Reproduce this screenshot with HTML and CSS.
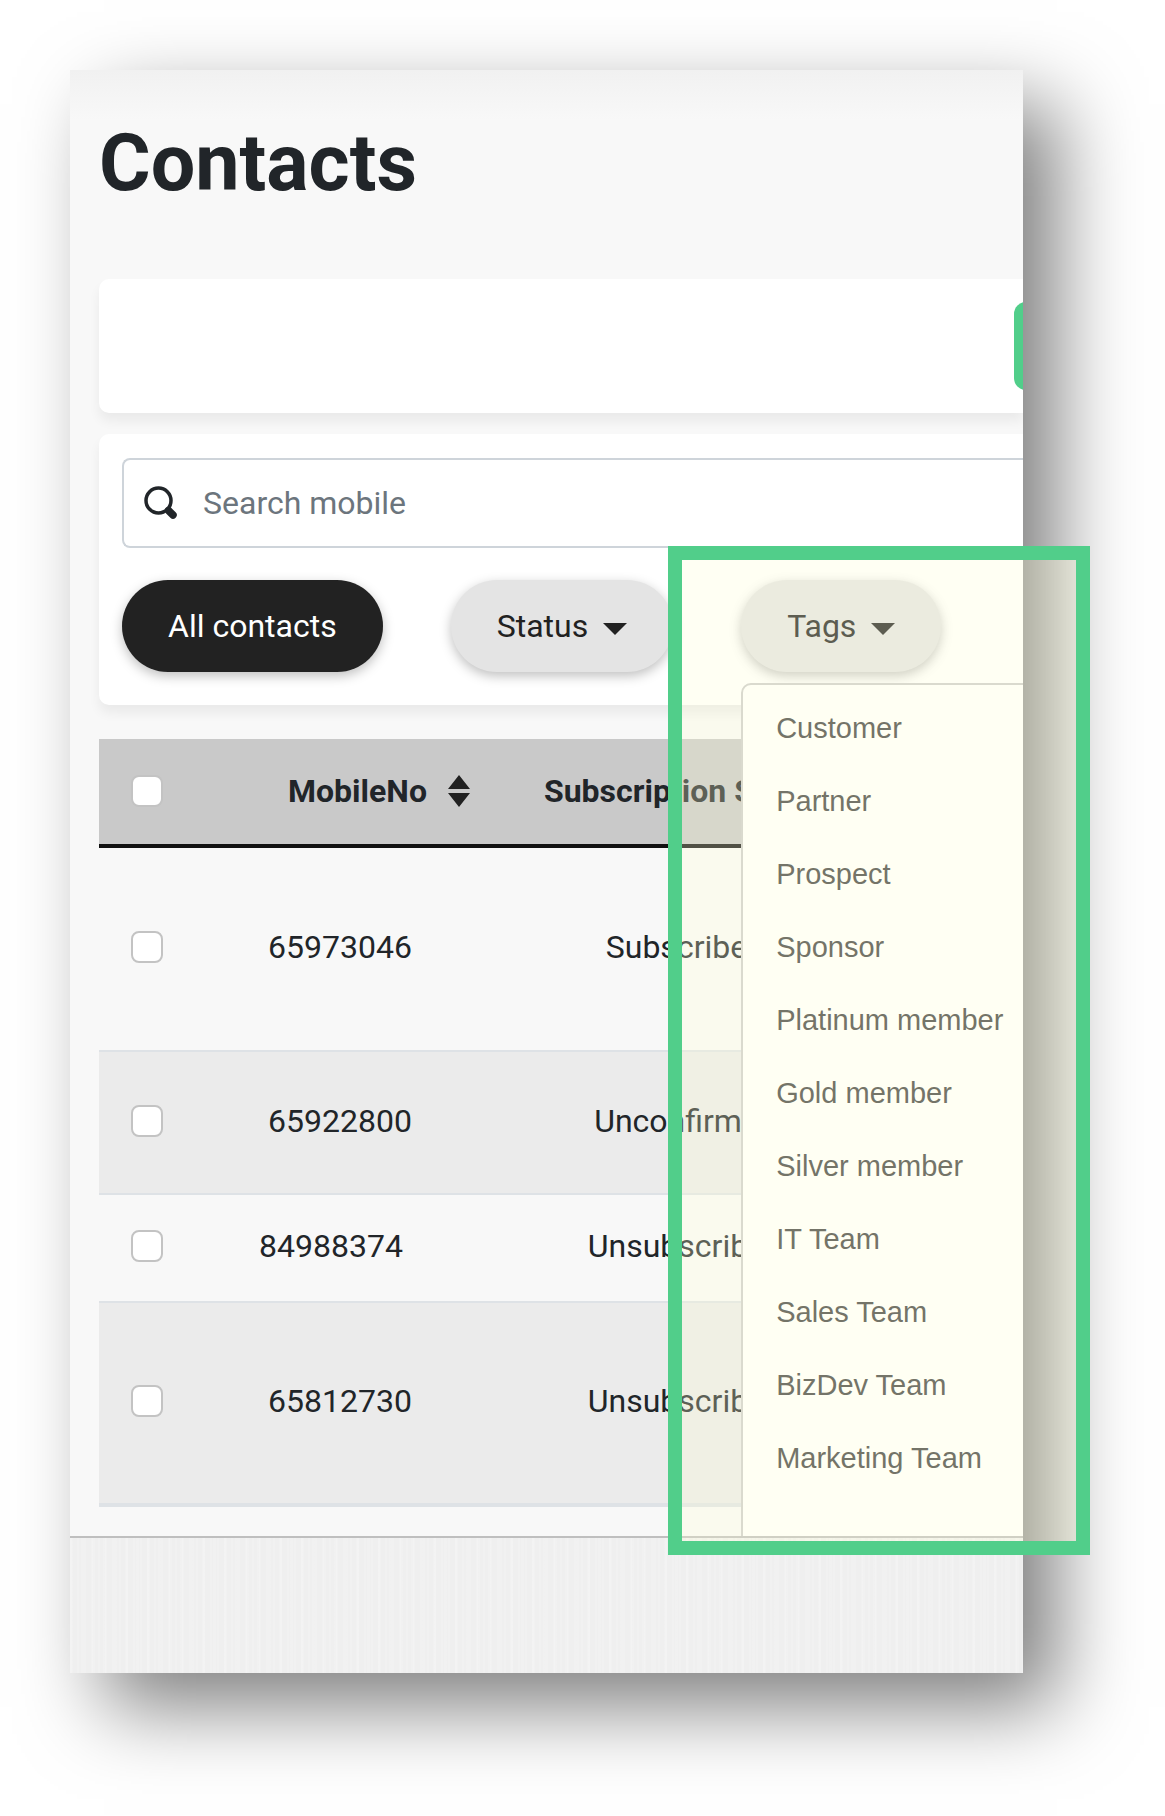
FILE: index.html
```html
<!DOCTYPE html>
<html lang="en">
<head>
    <meta charset="UTF-8">
    <meta name="viewport" content="width=device-width, initial-scale=1.0">
    <title>Contacts</title>
    <link rel="stylesheet" href="styles.css">
</head>
<body>
    <div class="stage">
        <main class="panel">
            <div class="content">
                <h1 class="title">Contacts</h1>

                <div class="card actions">
                    <button type="button" class="add-button" aria-label="Add contact"></button>
                </div>

                <div class="card filters">
                    <div class="search">
                        <svg class="search-icon" viewBox="0 0 34 34" aria-hidden="true">
                            <circle cx="14.5" cy="14.5" r="12.5" fill="none" stroke="#212529" stroke-width="3.5"/>
                            <path d="M24.5 24.5l4.500 4.500" stroke="#212529" stroke-width="7.5" stroke-linecap="round"/>
                        </svg>
                        <input type="text" id="search" placeholder="Search mobile" aria-label="Search mobile">
                    </div>
                    <div class="pills">
                        <button type="button" class="pill active">All contacts</button>
                        <button type="button" class="pill">Status <span class="caret"></span></button>
                        <div class="dropdown">
                            <button type="button" class="pill">Tags <span class="caret"></span></button>
                            <ul class="menu">
                                <li><a href="#">Customer</a></li>
                                <li><a href="#">Partner</a></li>
                                <li><a href="#">Prospect</a></li>
                                <li><a href="#">Sponsor</a></li>
                                <li><a href="#">Platinum member</a></li>
                                <li><a href="#">Gold member</a></li>
                                <li><a href="#">Silver member</a></li>
                                <li><a href="#">IT Team</a></li>
                                <li><a href="#">Sales Team</a></li>
                                <li><a href="#">BizDev Team</a></li>
                                <li><a href="#">Marketing Team</a></li>
                            </ul>
                        </div>
                    </div>
                </div>

                <table class="contacts">
                    <colgroup>
                        <col class="col-check">
                        <col class="col-mobile">
                        <col class="col-status">
                        <col>
                    </colgroup>
                    <thead>
                        <tr>
                            <th><input type="checkbox" aria-label="Select all"></th>
                            <th class="mobile">
                                <span class="sortable">
                                    MobileNo
                                    <svg class="sort" viewBox="0 0 22 34" aria-hidden="true">
                                        <path d="M11 1l11 14H0z M0 19h22L11 33z" fill="#212121"/>
                                    </svg>
                                </span>
                            </th>
                            <th>Subscription Status</th>
                            <th></th>
                        </tr>
                    </thead>
                    <tbody>
                        <tr class="tall">
                            <td><input type="checkbox" aria-label="Select 65973046"></td>
                            <td class="mobile">65973046</td>
                            <td>Subscribed</td>
                            <td></td>
                        </tr>
                        <tr class="medium">
                            <td><input type="checkbox" aria-label="Select 65922800"></td>
                            <td class="mobile">65922800</td>
                            <td>Unconfirmed</td>
                            <td></td>
                        </tr>
                        <tr class="small">
                            <td><input type="checkbox" aria-label="Select 84988374"></td>
                            <td class="mobile">84988374</td>
                            <td>Unsubscribed</td>
                            <td></td>
                        </tr>
                        <tr class="tall">
                            <td><input type="checkbox" aria-label="Select 65812730"></td>
                            <td class="mobile">65812730</td>
                            <td>Unsubscribed</td>
                            <td></td>
                        </tr>
                    </tbody>
                </table>
            </div>
            <div class="footer"></div>
        </main>
        <div class="highlight"></div>
    </div>
</body>
</html>
```
FILE: styles.css
```css
* {
    box-sizing: border-box;
}

body {
    margin: 0;
    background: #ffffff;
    color: #212529;
    font-family: Roboto, sans-serif;
    font-size: 32px;
    overflow-x: hidden;
}

.stage {
    position: relative;
    margin: 70px 142px 142px 70px;
}

.panel {
    overflow: hidden;
    background: #f8f8f8;
    box-shadow: 34px 34px 76px rgba(0, 0, 0, 0.5);
}

.content {
    padding: 45px 0 29px 29px;
    overflow: hidden;
    background: linear-gradient(#f1f1f1, #f8f8f8 50px);
}

.title {
    margin: 0 0 68px;
    font-size: 79px;
    line-height: 96px;
    font-weight: bold;
}

.card {
    background: #ffffff;
    border-radius: 10px 0 0 10px;
    box-shadow: 0 8px 12px rgba(0, 0, 0, 0.06);
}

.actions {
    display: flex;
    justify-content: flex-end;
    padding: 23px 0;
    margin-bottom: 21px;
}

/* runs off the right edge of the panel */
.add-button {
    flex: none;
    width: 200px;
    height: 88px;
    margin-right: -191px;
    border: none;
    border-radius: 12px;
    background: #51ce8a;
    cursor: pointer;
}

.filters {
    padding: 24px 0 33px 23px;
    margin-bottom: 34px;
}

.search {
    display: flex;
    align-items: center;
    height: 90px;
    padding-left: 20px;
    border: 2px solid #ced4da;
    border-right: none;
    border-radius: 8px 0 0 8px;
}

.search-icon {
    width: 34px;
    height: 34px;
}

.search input {
    flex: 1;
    min-width: 0;
    margin-left: 25px;
    padding: 0;
    border: none;
    outline: none;
    font: inherit;
    background: transparent;
}

.search input::placeholder {
    color: #6c757d;
}

.pills {
    display: flex;
    gap: 68px;
    margin-top: 32px;
}

.pill {
    display: flex;
    align-items: center;
    height: 92px;
    padding: 0 46px;
    border: none;
    border-radius: 46px;
    background: #e4e4e4;
    color: #212121;
    font: inherit;
    white-space: nowrap;
    box-shadow: 0 4px 12px rgba(0, 0, 0, 0.25);
    cursor: pointer;
}

.pill.active {
    background: #222222;
    color: #ffffff;
}

.caret {
    margin: 6px 0 0 15px;
    border: 12px solid transparent;
    border-top-color: #212121;
    border-bottom: none;
}

.dropdown {
    position: relative;
}

.menu {
    position: absolute;
    top: 103px;
    left: 0;
    z-index: 1;
    width: 400px;
    margin: 0;
    padding: 7px 33px 60px;
    border: 2px solid #cccccc;
    border-radius: 10px;
    background: #ffffff;
    list-style: none;
}

.menu a {
    display: block;
    color: #414141;
    font-family: "Liberation Sans", Arial, sans-serif;
    font-size: 29px;
    line-height: 73px;
    text-decoration: none;
}

.contacts {
    width: 100%;
    table-layout: fixed;
    border-collapse: separate;
    border-spacing: 0;
    border-bottom: 4px solid #dee2e6;
}

.col-check {
    width: 96px;
}

.col-mobile {
    width: 305px;
}

.col-status {
    width: 371px;
}

.contacts th,
.contacts td {
    padding: 0 0 4px;
    text-align: center;
    white-space: nowrap;
}

.contacts th {
    height: 109px;
    padding-bottom: 2px;
    background: #c9c9c9;
    border-bottom: 4px solid #111111;
}

.contacts td {
    border-top: 2px solid #dee2e6;
}

.contacts tbody tr:first-child td {
    border-top: none;
}

.contacts tbody tr:nth-child(even) {
    background: #ebebeb;
}

.contacts th.mobile {
    padding-left: 93px;
    text-align: left;
}

.contacts td.mobile {
    padding-left: 73px;
    text-align: left;
}

.contacts .small td.mobile {
    padding-left: 64px;
}

.tall {
    height: 202px;
}

.medium {
    height: 143px;
}

.small {
    height: 108px;
}

.sortable {
    display: flex;
    align-items: center;
    gap: 21px;
}

.sort {
    width: 22px;
    height: 34px;
}

input[type="checkbox"] {
    appearance: none;
    display: block;
    width: 32px;
    height: 32px;
    margin: 0 auto;
    border: 2px solid #c3c3c3;
    border-radius: 8px;
    background: #ffffff;
}

.footer {
    height: 137px;
    border-top: 2px solid #bfbfbf;
    background:
        repeating-linear-gradient(90deg, rgba(255, 255, 255, 0.15) 0 2px, transparent 2px 7px),
        repeating-linear-gradient(90deg, rgba(255, 255, 255, 0.12) 0 3px, transparent 3px 11px),
        #efefef;
}

/* callout frame round the tags menu */
.highlight {
    position: absolute;
    top: 476px;
    right: -67px;
    bottom: 118px;
    left: 598px;
    border: 14px solid #51ce8a;
    background: rgba(255, 255, 210, 0.27);
    background-clip: padding-box;
    pointer-events: none;
    z-index: 2;
}
```
